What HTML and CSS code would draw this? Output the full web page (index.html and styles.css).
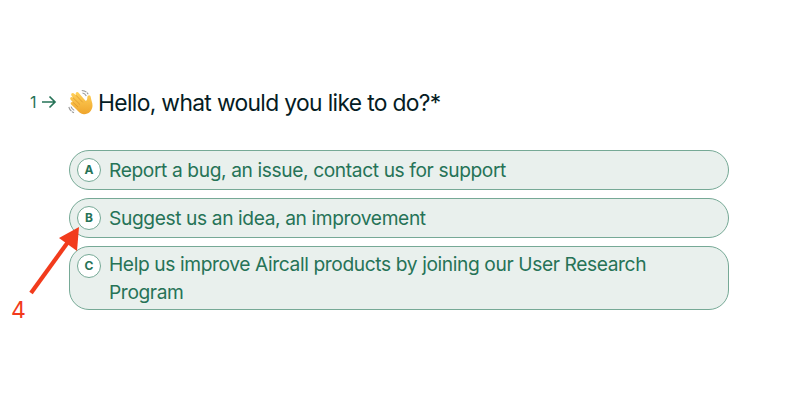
FILE: index.html
```html
<!DOCTYPE html>
<html lang="en"><head><meta charset="utf-8"><title>Survey</title><link rel="stylesheet" href="styles.css"></head>
<body>
<main class="question">
<header class="heading">
<span class="number">1</span>
<svg class="next" viewBox="0 0 16 14"><path d="M1 7H14M8.5 1.5L14 7L8.5 12.5"/></svg>
<svg class="wave" viewBox="0 0 26 26">
<defs><linearGradient id="skin" x1="0" y1="0" x2="0" y2="1"><stop offset="0" stop-color="#ffd15a"/><stop offset="1" stop-color="#efa52c"/></linearGradient></defs>
<path class="palm" d="M8.5 20.5L3.2 15.6C1.8 14 3.6 12.2 5 13.4L2.7 10.8C1.2 8.8 3.4 7.2 5 8.7L3.5 6.7C2.3 4.6 4.7 2.9 6.3 4.7L8 6.3C6.6 3.5 9.4 2 10.8 4L17.5 11.7C18.7 12 19.3 10.5 19.3 8.6C19.3 5.7 22.6 5.3 22.8 8.3C23 11 24.7 13.8 24.5 17C24.1 22 20.2 25.5 15.8 25.2C12.8 25 10.8 22.8 8.5 20.5Z"/>
<path class="creases" d="M5 13.4L10 18M5 8.7L12 15.6M8 6.3L14.8 13.4"/>
<path class="motion" d="M.8 18Q2 22 6 23.8M3 17.6Q4 20.3 7 21.8M13.8 1.5Q18 1.7 20.2 5.2M14.5 4Q17 4.3 18.3 7"/>
</svg>
<h1 class="title">Hello, what would you like to do?*</h1>
</header>
<div class="options">
<div class="option"><span class="key">A</span><span class="label">Report a bug, an issue, contact us for support</span></div>
<div class="option"><span class="key">B</span><span class="label">Suggest us an idea, an improvement</span></div>
<div class="option tall"><span class="key">C</span><span class="label">Help us improve Aircall products by joining our User Research Program</span></div>
</div>
</main>
<div class="annotation"><svg viewBox="0 0 90 110"><path class="shaft" d="M31 73L68 22"/><path class="head" d="M79 7L77 31L59 18Z"/></svg><span class="step">4</span></div>
</body></html>
```
FILE: styles.css
```css
* { box-sizing: border-box; }
body { margin: 0; background: #fff; font-family: Inter, sans-serif; color: #051c24; }
.question { padding: 85px 71px 0 29px; }
.heading { display: flex; align-items: center; height: 34px; }
.number { width: 12px; padding-left: 1px; font-size: 16px; color: #267357; }
.next { width: 16px; height: 14px; fill: none; stroke: #267357; stroke-width: 1.7; }
.wave { width: 26px; height: 26px; margin: 0 4px 0 11px; }
.title { margin: 0; font-size: 22.8px; font-weight: 400; letter-spacing: -.65px; white-space: nowrap; }
.options { display: grid; gap: 8px; margin: 31px 0 0 40px; }
.option { display: flex; gap: 8px; height: 40px; padding: 5px 60px 5px 7px; border: 1px solid #76a996; border-radius: 20px; background: #e9f0ed; color: #267357; }
.tall { height: 64px; padding-top: 3px; }
.key { display: flex; flex: none; align-items: center; justify-content: center; width: 24px; height: 24px; margin-top: 2px; padding-bottom: 1px; border: 1px solid #76a996; border-radius: 50%; background: #fff; font-size: 12px; font-weight: 700; }
.tall .key { margin-top: 4px; }
.label { font-size: 19.2px; line-height: 28px; letter-spacing: -.39px; }
.annotation { position: absolute; left: 0; top: 220px; width: 90px; height: 110px; color: #f23b1c; }
.annotation svg { width: 90px; height: 110px; }
.shaft { fill: none; stroke: currentColor; stroke-width: 4.2; }
.head { fill: currentColor; }
.step { position: absolute; left: 11px; top: 76px; font-size: 23px; line-height: 28px; }
.palm { fill: url(#skin); }
.creases { fill: none; stroke: #d9912b; stroke-width: .7; }
.motion { fill: none; stroke: #999; stroke-width: 1.1; stroke-dasharray: 5 .7; }
```
